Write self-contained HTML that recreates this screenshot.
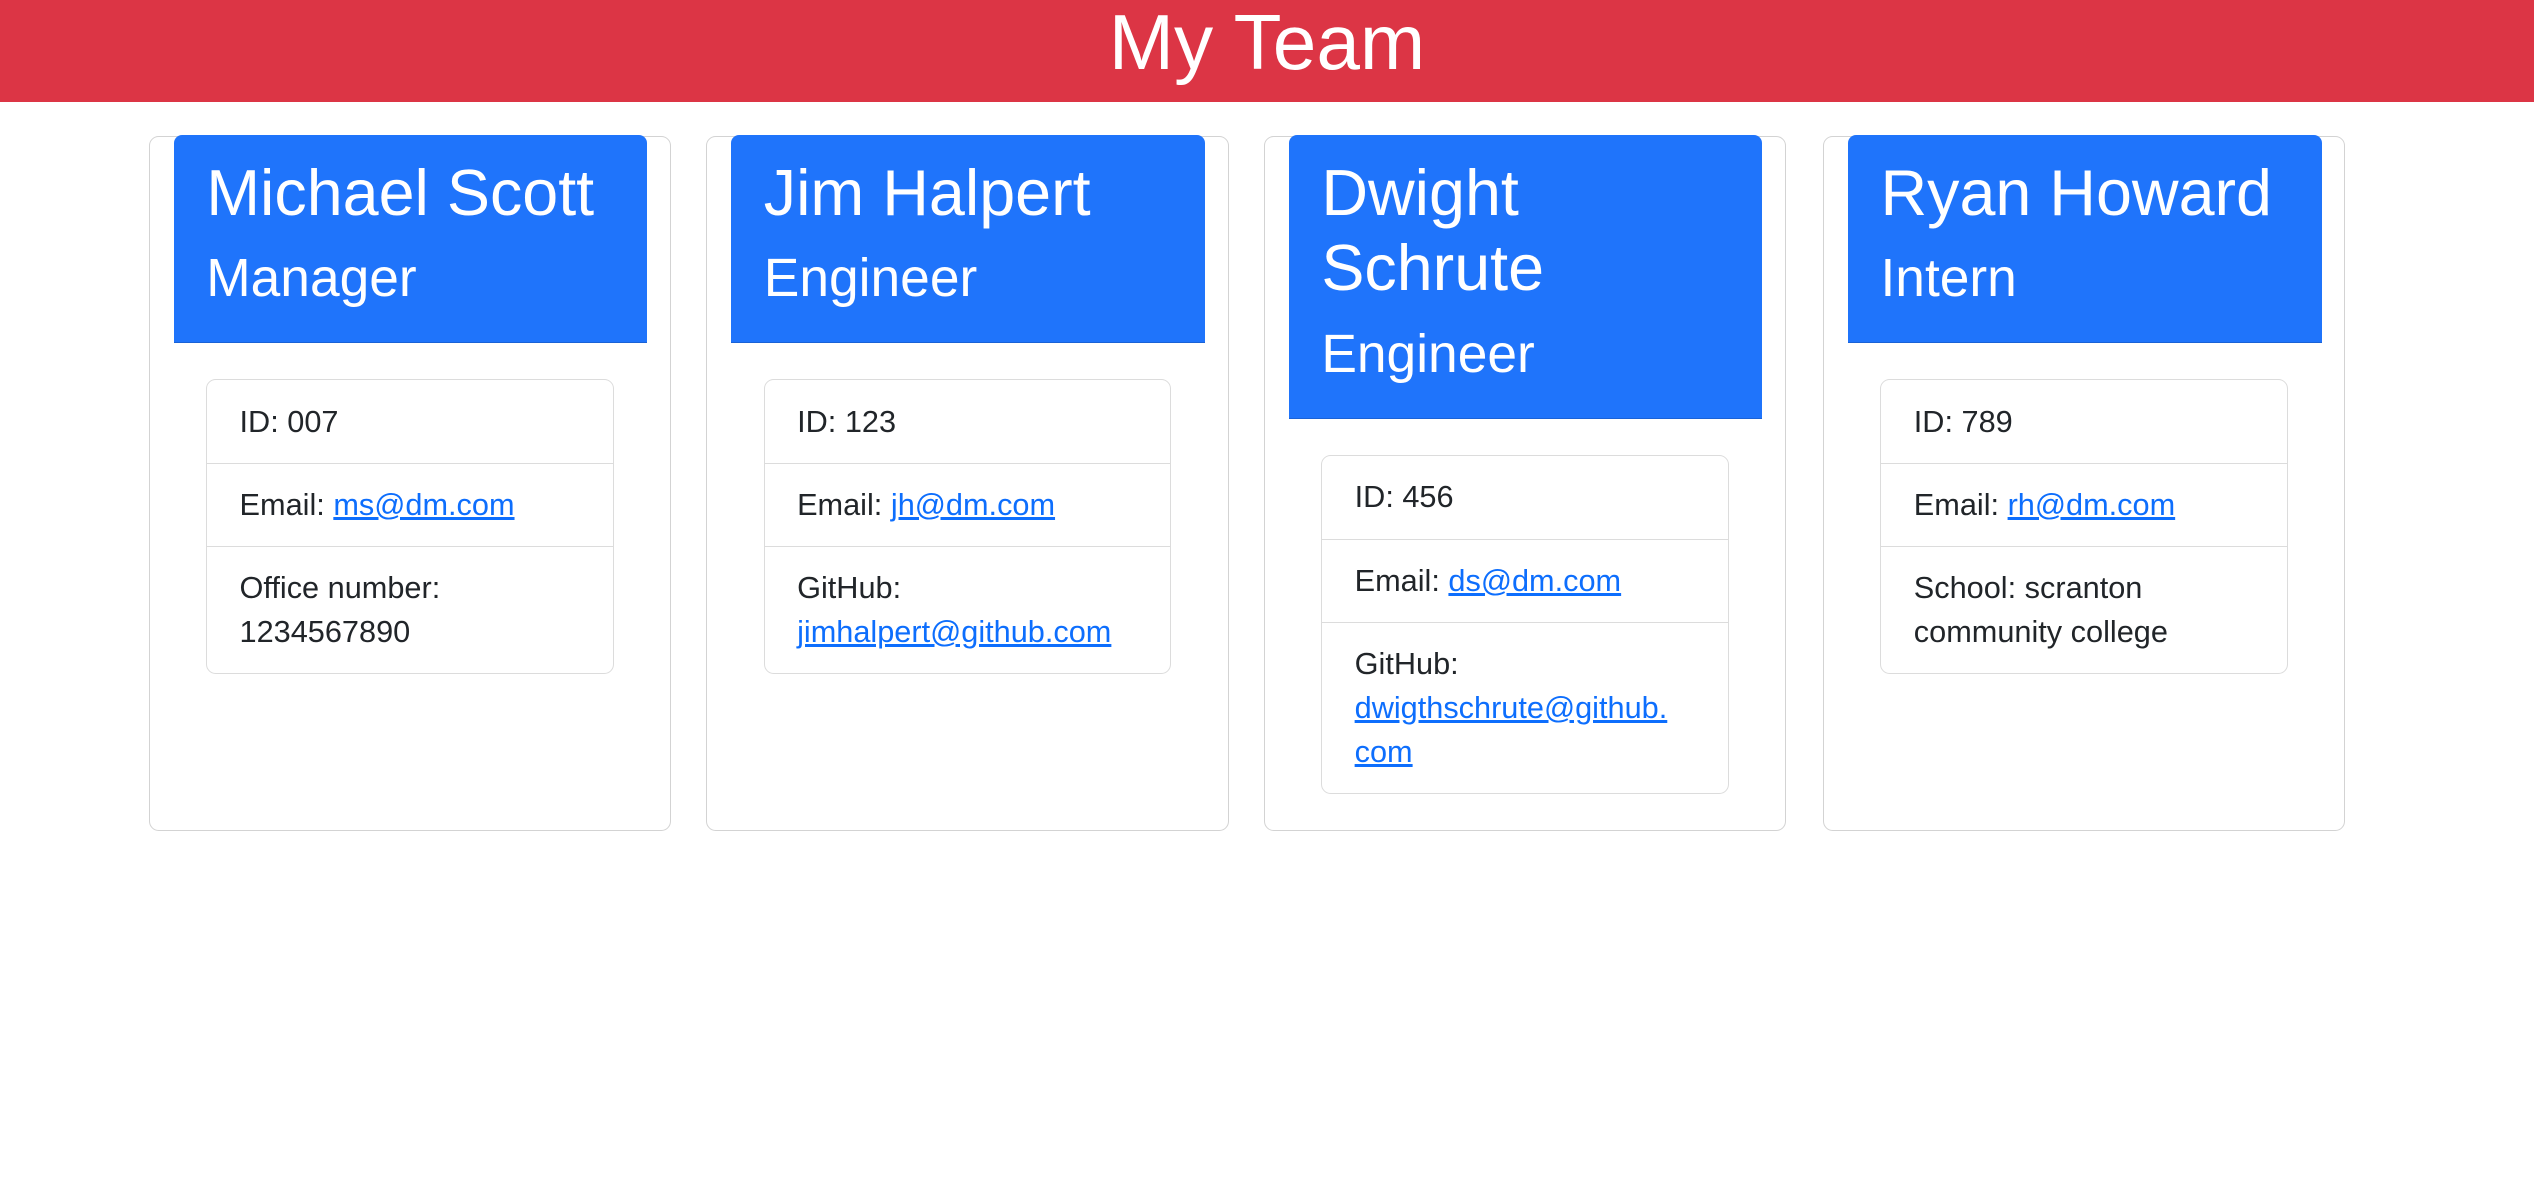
<!DOCTYPE html>
<html><head><meta charset="utf-8"><style>
html,body{margin:0;padding:0;background:#fff;}
body{zoom:1.61607;width:1568px;height:737.6px;overflow:hidden;font-family:"Liberation Sans",Arial,sans-serif;color:#212529;}
.top{background:#dc3545;height:63px;color:#fff;text-align:center;font-size:48.5px;line-height:52px;}
.card{position:absolute;top:84px;width:322px;height:429px;border:1px solid #d3d3d3;border-radius:6px;}
.hd{position:absolute;left:15px;top:-1px;width:253px;background:#1f74fb;color:#fff;padding:12px 20px 0;border-radius:5px 5px 0 0;border-bottom:1px solid #1a62d6;}
.hd h2{margin:0;font-size:40px;font-weight:normal;line-height:47px;}
.hd h3{margin:11px 0 20px;font-size:33px;font-weight:normal;line-height:38px;}
ul{position:absolute;left:35px;width:251px;margin:0;padding:0;list-style:none;border:1px solid #dcdcdc;border-radius:6px;}
li{padding:12px 20px;font-size:19px;line-height:27px;border-top:1px solid #dcdcdc;}
li:first-child{border-top:none;}
a{color:#0d6efd;text-decoration:underline;}
</style></head><body>
<div class="top">My Team</div>
<div class="card" style="left:92px"><div class="hd"><h2>Michael Scott</h2><h3>Manager</h3></div>
<ul style="top:150px"><li>ID: 007</li><li>Email: <a>ms@dm.com</a></li><li>Office number: 1234567890</li></ul></div>
<div class="card" style="left:437px"><div class="hd"><h2>Jim Halpert</h2><h3>Engineer</h3></div>
<ul style="top:150px"><li>ID: 123</li><li>Email: <a>jh@dm.com</a></li><li>GitHub: <a>jimhalpert@github.com</a></li></ul></div>
<div class="card" style="left:782px"><div class="hd"><h2>Dwight<br>Schrute</h2><h3>Engineer</h3></div>
<ul style="top:197px"><li>ID: 456</li><li>Email: <a>ds@dm.com</a></li><li>GitHub: <a>dwigthschrute@github.<br>com</a></li></ul></div>
<div class="card" style="left:1128px"><div class="hd"><h2>Ryan Howard</h2><h3>Intern</h3></div>
<ul style="top:150px"><li>ID: 789</li><li>Email: <a>rh@dm.com</a></li><li>School: scranton community college</li></ul></div>
</body></html>
